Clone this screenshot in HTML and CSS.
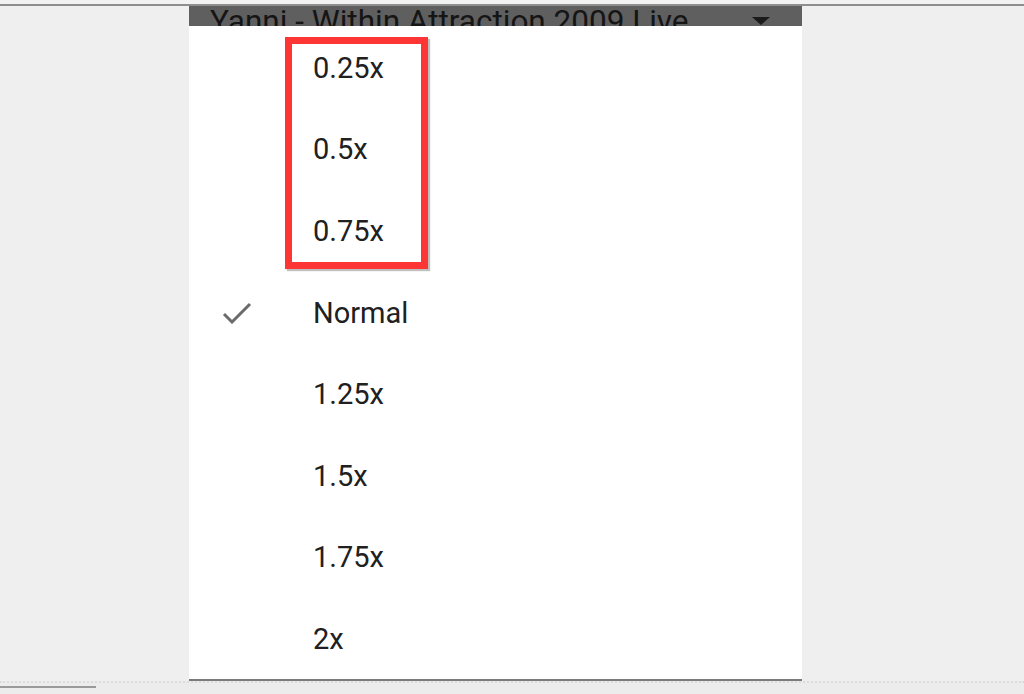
FILE: index.html
```html
<!DOCTYPE html>
<html lang="en">
<head>
    <meta charset="UTF-8">
    <meta name="viewport" content="width=device-width, initial-scale=1.0">
    <title>Playback speed</title>
    <link rel="stylesheet" href="styles.css">
</head>
<body>
    <div class="topbar"></div>
    <div class="main">
        <div class="side"></div>
        <div class="panel">
            <!-- video title bar, cut off by the menu -->
            <div class="title-bar">
                <span class="title">Yanni - Within Attraction 2009 Live</span>
                <span class="caret"></span>
            </div>
            <ul class="speed-list">
                <li class="speed">0.25x</li>
                <li class="speed">0.5x</li>
                <li class="speed">0.75x</li>
                <li class="speed selected">
                    <svg class="check" width="30" height="22" viewBox="0 0 30 22">
                        <path d="M2 12 L10 20 L28 2" fill="none" stroke="#6b6b6b" stroke-width="3"/>
                    </svg>
                    Normal
                </li>
                <li class="speed">1.25x</li>
                <li class="speed">1.5x</li>
                <li class="speed">1.75x</li>
                <li class="speed">2x</li>
            </ul>
            <div class="highlight"></div>
        </div>
        <div class="side"></div>
    </div>
    <div class="footer">
        <div class="footer-tab"></div>
    </div>
</body>
</html>
```
FILE: styles.css
```css
body {
    margin: 0;
    background-color: #efefef;
    font-family: Roboto, "Noto Sans", sans-serif;
    height: 694px;
    overflow: hidden;
    display: flex;
    flex-direction: column;
}

.topbar {
    height: 4px;
    background-color: #f2f2f2;
    border-bottom: 2px solid #8e8e8e;
}

.main {
    display: flex;
    height: 675px;
}

.side {
    flex: 1;
}

.main .side:first-child {
    flex: 0 0 189px;
}

.panel {
    position: relative;
    width: 613px;
    background-color: #ffffff;
    border-bottom: 2px solid #7a7a7a;
    box-sizing: border-box;
}

.title-bar {
    position: relative;
    height: 20px;
    background-color: #5f5f5f;
    overflow: hidden;
}

.title {
    display: block;
    padding-left: 21px;
    font-size: 31.5px;
    line-height: 31px;
    color: #151515;
    white-space: nowrap;
}

.caret {
    position: absolute;
    left: 563px;
    top: 11px;
    width: 0;
    height: 0;
    border-left: 9px solid transparent;
    border-right: 9px solid transparent;
    border-top: 8px solid #1a1a1a;
}

.speed-list {
    list-style: none;
    margin: 0;
    padding: 1px 0 0 0;
}

.speed {
    position: relative;
    height: 81.6px;
    display: flex;
    align-items: center;
    padding-left: 124px;
    font-size: 29px;
    color: #202020;
}

.check {
    position: absolute;
    left: 33px;
    top: 30px;
}

.highlight {
    position: absolute;
    left: 96px;
    top: 31px;
    width: 143px;
    height: 232px;
    box-sizing: border-box;
    border: 7px solid #fd3535;
    box-shadow: 2px 2px 1px rgba(0, 0, 0, 0.25);
}

.footer {
    flex: 1;
    border-top: 2px dotted #dcdcdc;
    background-color: #ececec;
    position: relative;
}

.footer-tab {
    width: 96px;
    height: 2px;
    margin-top: 3px;
    background-color: #9a9a9a;
}
```
